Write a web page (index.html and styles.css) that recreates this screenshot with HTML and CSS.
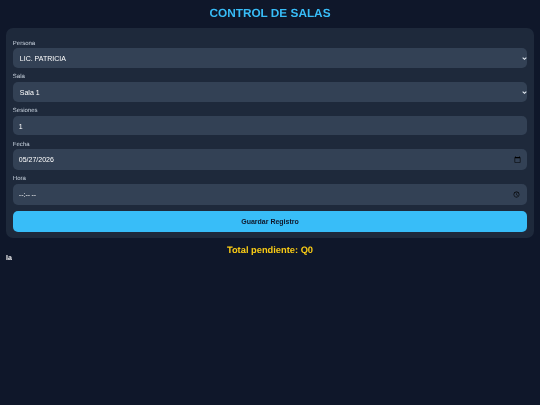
FILE: index.html
```html
<!DOCTYPE html>
<html lang="es">
<head>
<meta charset="utf-8">
<title>Control de Salas</title>
<link rel="stylesheet" href="styles.css">
</head>
<body>
<main class="page">
<h1 class="title">CONTROL DE SALAS</h1>
<form class="card">
  <label class="label" for="persona">Persona</label>
  <select class="field pick" id="persona"><option>LIC. PATRICIA</option></select>
  <label class="label" for="sala">Sala</label>
  <select class="field pick" id="sala"><option>Sala 1</option></select>
  <label class="label" for="sesiones">Sesiones</label>
  <input class="field num" id="sesiones" type="text" value="1">
  <label class="label" for="fecha">Fecha</label>
  <input class="field fecha" id="fecha" type="date" value="2026-05-27">
  <label class="label" for="hora">Hora</label>
  <input class="field hora" id="hora" type="time">
  <button class="save" type="button">Guardar Registro</button>
</form>
<h2 class="total">Total pendiente: Q0</h2>
<div class="list">la</div>
</main>
</body>
</html>
```
FILE: styles.css
```css
* { box-sizing: border-box; }
html, body { height: 100%; }
html { background: #0f172a; }
body {
  margin: 0;
  color: #fff;
  font-family: "Liberation Sans", Arial, sans-serif;
  text-rendering: geometricPrecision;
}
.page {
  padding: 6px;
  will-change: transform;
}
.title {
  margin: 0 0 8px;
  height: 14px;
  line-height: 14px;
  text-align: center;
  font-size: 11.8px;
  font-weight: 700;
  color: #38bdf8;
}
.card {
  display: flex;
  flex-direction: column;
  background: #1e293b;
  border-radius: 7px;
  padding: 9.7px 6.8px 6px;
}
.label {
  display: block;
  height: 10.6px;
  line-height: 12.4px;
  font-size: 6px;
  color: #cbd5e1;
}
.field {
  display: block;
  width: 100%;
  height: 20px;
  margin: 0 0 3.2px;
  padding: 0 4px 0 6px;
  border: 0;
  border-radius: 5px;
  background-color: #334155;
  color: #fff;
  font-family: inherit;
  font-size: 7px;
  outline: 0;
}
.field::-webkit-datetime-edit-fields-wrapper,
.field::-webkit-datetime-edit-text,
.field::-webkit-datetime-edit-month-field,
.field::-webkit-datetime-edit-day-field,
.field::-webkit-datetime-edit-year-field,
.field::-webkit-datetime-edit-hour-field,
.field::-webkit-datetime-edit-minute-field,
.field::-webkit-datetime-edit-ampm-field {
  padding: 0;
}
.pick {
  appearance: none;
  padding-left: 7px;
  background-image: url("data:image/svg+xml,%3Csvg xmlns='http://www.w3.org/2000/svg' viewBox='0 0 6 4'%3E%3Cpath d='M.8.8 3 3 5.2.8' fill='none' stroke='%23e2e8f0' stroke-width='1.3'/%3E%3C/svg%3E");
  background-repeat: no-repeat;
  background-size: 4.5px 3px;
  background-position: right 1.2px center;
}
.num { height: 19.6px; padding-top: 1px; }
.fecha { height: 20.7px; }
.hora { height: 21.7px; }
.save {
  height: 20.7px;
  margin-top: 2.8px;
  border: 0;
  border-radius: 5px;
  background: #38bdf8;
  color: #0f172a;
  font-family: inherit;
  font-size: 7px;
  font-weight: 700;
}
.total {
  margin: 6.6px 0 0;
  height: 11px;
  line-height: 11px;
  text-align: center;
  font-size: 9.3px;
  font-weight: 700;
  color: #facc15;
}
.list {
  margin-top: -0.6px;
  font-size: 7px;
  font-weight: 700;
  line-height: 8px;
}
```
